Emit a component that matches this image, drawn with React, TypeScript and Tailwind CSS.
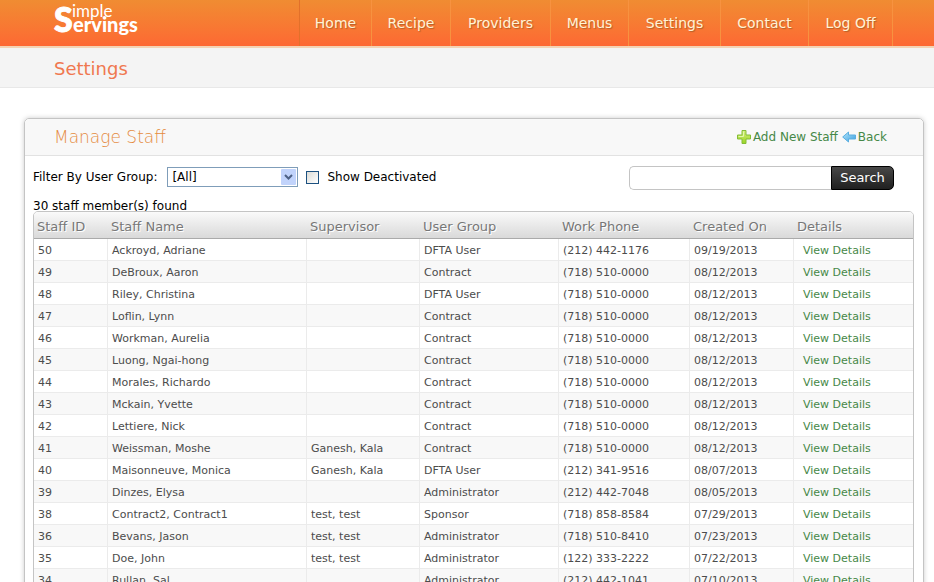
const navItems = [
  { label: 'Home', width: 'w-[72px]' },
  { label: 'Recipe', width: 'w-[79px]' },
  { label: 'Providers', width: 'w-[100px]' },
  { label: 'Menus', width: 'w-[78px]' },
  { label: 'Settings', width: 'w-[92px]' },
  { label: 'Contact', width: 'w-[88px]' },
  { label: 'Log Off', width: 'w-[84px]' },
];

const columns = [
  { label: 'Staff ID', width: 'w-[74px]' },
  { label: 'Staff Name', width: 'w-[199px]' },
  { label: 'Supervisor', width: 'w-[113px]' },
  { label: 'User Group', width: 'w-[139px]' },
  { label: 'Work Phone', width: 'w-[131px]' },
  { label: 'Created On', width: 'w-[104px]' },
  { label: 'Details', width: '' },
];

const staff = [
  ['50', 'Ackroyd, Adriane', '', 'DFTA User', '(212) 442-1176', '09/19/2013'],
  ['49', 'DeBroux, Aaron', '', 'Contract', '(718) 510-0000', '08/12/2013'],
  ['48', 'Riley, Christina', '', 'DFTA User', '(718) 510-0000', '08/12/2013'],
  ['47', 'Loflin, Lynn', '', 'Contract', '(718) 510-0000', '08/12/2013'],
  ['46', 'Workman, Aurelia', '', 'Contract', '(718) 510-0000', '08/12/2013'],
  ['45', 'Luong, Ngai-hong', '', 'Contract', '(718) 510-0000', '08/12/2013'],
  ['44', 'Morales, Richardo', '', 'Contract', '(718) 510-0000', '08/12/2013'],
  ['43', 'Mckain, Yvette', '', 'Contract', '(718) 510-0000', '08/12/2013'],
  ['42', 'Lettiere, Nick', '', 'Contract', '(718) 510-0000', '08/12/2013'],
  ['41', 'Weissman, Moshe', 'Ganesh, Kala', 'Contract', '(718) 510-0000', '08/12/2013'],
  ['40', 'Maisonneuve, Monica', 'Ganesh, Kala', 'DFTA User', '(212) 341-9516', '08/07/2013'],
  ['39', 'Dinzes, Elysa', '', 'Administrator', '(212) 442-7048', '08/05/2013'],
  ['38', 'Contract2, Contract1', 'test, test', 'Sponsor', '(718) 858-8584', '07/29/2013'],
  ['36', 'Bevans, Jason', 'test, test', 'Administrator', '(718) 510-8410', '07/23/2013'],
  ['35', 'Doe, John', 'test, test', 'Administrator', '(122) 333-2222', '07/22/2013'],
  ['34', 'Rullan, Sal', '', 'Administrator', '(212) 442-1041', '07/10/2013'],
];

function Logo() {
  return (
    <svg width="90" height="46" viewBox="0 0 90 46" fill="#fff" role="img" aria-label="Simple Servings" className="overflow-visible font-['Lato',sans-serif]">
      <text x="0" y="32" fontSize="34" fontWeight="900" stroke="#fff" strokeWidth="1">S</text>
      <text x="18" y="17" fontSize="17" fontWeight="400">imple</text>
      <text x="19" y="32" fontSize="20" fontWeight="900">ervings</text>
    </svg>
  );
}

function PlusIcon() {
  return (
    <svg width="14" height="14" viewBox="0 0 14 14" aria-hidden="true">
      <defs>
        <linearGradient id="plus" x1="0" y1="0" x2="0" y2="1">
          <stop offset="0" stopColor="#d5f07c" />
          <stop offset="1" stopColor="#9ad424" />
        </linearGradient>
      </defs>
      <path d="M5 .5h4V5h4.500v4H9v4.500H5V9H.5V5H5z" fill="url(#plus)" stroke="#84bd36" />
      <path d="M6.500 1.500V6.500H1.500" fill="none" stroke="#e4f6ae" />
    </svg>
  );
}

function BackIcon() {
  return (
    <svg width="14" height="12" viewBox="0 0 14 12" aria-hidden="true">
      <defs>
        <linearGradient id="back" x1="0" y1="0" x2="1" y2="1">
          <stop offset="0" stopColor="#b5e6fb" />
          <stop offset="1" stopColor="#3b9fe0" />
        </linearGradient>
      </defs>
      <path d="M.7 6 6.500 1v3h7v4h-7v3z" fill="url(#back)" stroke="#5aaee0" strokeLinejoin="round" />
    </svg>
  );
}

export default function App() {
  return (
    <div className="min-h-screen bg-white font-['DejaVu_Sans',sans-serif] text-black">
      <header className="flex h-12 items-stretch justify-between border-b-2 border-[#f3d3b4] bg-linear-to-b from-[#f08c32] to-[#fd6833] pr-[41px] pl-[54px]">
        <a href="#home"><Logo /></a>
        <nav className="flex border-l border-[#e2702a]">
          {navItems.map((item) => (
            <a
              key={item.label}
              href="#nav"
              className={`${item.width} flex items-center justify-center border-r border-[#f79240] text-[14px] text-[#fff3d6] [text-shadow:1px_1px_1px_#b5602a]`}
            >
              {item.label}
            </a>
          ))}
        </nav>
      </header>

      <div className="flex h-10 items-center border-b border-[#e8e8e8] bg-[#f4f4f4] pt-[2px] pl-[54px]">
        <h1 className="text-[18px] text-[#f07850]">Settings</h1>
      </div>

      <main className="mt-[30px] mr-[10px] mb-6 ml-6 rounded-[5px] border border-[#c4c4c4] shadow-[0_0_5px_#ccc]">
        <div className="flex h-[37px] items-center justify-between rounded-t-[5px] border-b border-[#e2e2e2] bg-[#f8f8f8] pr-9 pl-[29px]">
          <h2 className="pt-[2px] font-['DejaVu_Sans_Light','DejaVu_Sans',sans-serif] text-[17px] text-[#e58b3f]">Manage Staff</h2>
          <div className="flex gap-1 text-[12px] text-[#468847]">
            <a href="#add" className="flex items-center gap-[2px]"><PlusIcon />Add New Staff</a>
            <a href="#back" className="flex items-center gap-[2px]"><BackIcon />Back</a>
          </div>
        </div>

        <div className="pt-[10px] pr-[9px] pb-4 pl-2">
          <div className="flex justify-between pr-5 text-[12px]">
            <div className="flex h-[22px] items-center">
              <label htmlFor="group">Filter By User Group:</label>
              <div className="ml-[10px] grid w-[131px] items-center">
                <select id="group" className="col-start-1 row-start-1 h-5 w-full appearance-none border border-[#7f9db9] bg-white pl-1 text-[12px]">
                  <option>[All]</option>
                </select>
                <svg className="pointer-events-none col-start-1 row-start-1 mr-[2px] justify-self-end" width="15" height="16" viewBox="0 0 15 16" aria-hidden="true">
                  <rect width="15" height="16" rx="1" fill="#c1d3fb" />
                  <path d="m4 6 3.500 3.500L11 6" fill="none" stroke="#4d6185" strokeWidth="2" />
                </svg>
              </div>
              <input id="deactivated" type="checkbox" className="mr-2 ml-2 h-[13px] w-[13px] appearance-none border border-[#1c5180] bg-linear-to-br from-[#dcdcd7] to-white checked:bg-[#1c5180]" />
              <label htmlFor="deactivated">Show Deactivated</label>
            </div>
            <form className="flex h-6 text-[13px]">
              <input type="search" aria-label="Search staff" className="w-[202px] rounded-l-[5px] border border-r-0 border-[#c4c4c4] bg-white px-2" />
              <button type="button" className="w-[63px] rounded-r-[5px] border border-black bg-linear-to-b from-[#484848] to-[#202020] text-white">Search</button>
            </form>
          </div>

          <p className="mt-2 h-[13px] text-[12px] leading-4">30 staff member(s) found</p>

          <div className="overflow-hidden rounded-t-[5px] border border-[#c4c4c4]">
            <table className="w-full table-fixed border-separate border-spacing-0 text-left text-[11px] text-[#4c4c4c]">
              <thead>
                <tr className="bg-linear-to-b from-[#fafafa] to-[#d8d8d8]">
                  {columns.map((column) => (
                    <th key={column.label} className={`${column.width} h-[27px] border-b border-[#aaa] px-[3px] pt-[3px] pb-0 text-[13px] font-normal text-[#777] [text-shadow:1px_1px_0_#fff]`}>
                      {column.label}
                    </th>
                  ))}
                </tr>
              </thead>
              <tbody>
                {staff.map((row) => (
                  <tr key={row[0]} className="even:bg-[#f8f8f8]">
                    {row.map((value, index) => (
                      <td key={index} className="h-[22px] border-r border-b border-[#ebebeb] px-1 pt-[3px] pb-0">{value}</td>
                    ))}
                    <td className="h-[22px] border-b border-[#ebebeb] pt-[3px] pb-0 pl-[9px]">
                      <a href="#details" className="text-[#468847]">View Details</a>
                    </td>
                  </tr>
                ))}
              </tbody>
            </table>
          </div>
        </div>
      </main>
    </div>
  );
}
